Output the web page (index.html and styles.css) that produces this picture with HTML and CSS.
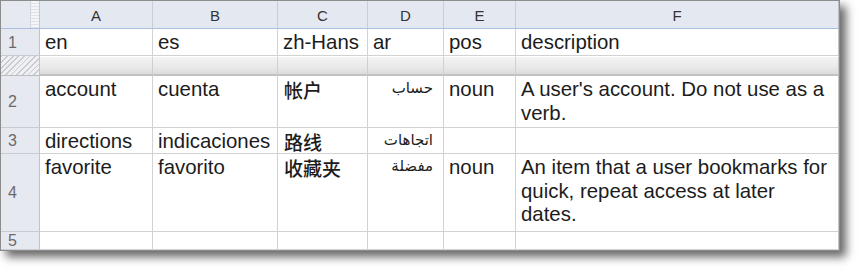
FILE: index.html
```html
<!DOCTYPE html>
<html lang="en">
<head>
<meta charset="utf-8">
<title>Spreadsheet</title>
<link rel="stylesheet" href="styles.css">
</head>
<body>
<div class="sheet">
  <div class="corner"><span class="grip"></span></div>
  <div class="colhdr">A</div>
  <div class="colhdr">B</div>
  <div class="colhdr">C</div>
  <div class="colhdr">D</div>
  <div class="colhdr">E</div>
  <div class="colhdr last">F</div>

  <div class="rowhdr">1</div>
  <div class="cell">en</div>
  <div class="cell">es</div>
  <div class="cell">zh-Hans</div>
  <div class="cell">ar</div>
  <div class="cell">pos</div>
  <div class="cell last">description</div>

  <div class="frozen-hdr"></div>
  <div class="frozen"></div>
  <div class="frozen"></div>
  <div class="frozen"></div>
  <div class="frozen"></div>
  <div class="frozen"></div>
  <div class="frozen last"></div>

  <div class="rowhdr">2</div>
  <div class="cell">account</div>
  <div class="cell">cuenta</div>
  <div class="cell zh" lang="zh-Hans">帐户</div>
  <div class="cell ar" lang="ar" dir="rtl">حساب</div>
  <div class="cell">noun</div>
  <div class="cell last">A user's account. Do not use as a verb.</div>

  <div class="rowhdr">3</div>
  <div class="cell">directions</div>
  <div class="cell">indicaciones</div>
  <div class="cell zh" lang="zh-Hans">路线</div>
  <div class="cell ar" lang="ar" dir="rtl">اتجاهات</div>
  <div class="cell"></div>
  <div class="cell last"></div>

  <div class="rowhdr">4</div>
  <div class="cell">favorite</div>
  <div class="cell">favorito</div>
  <div class="cell zh" lang="zh-Hans">收藏夹</div>
  <div class="cell ar" lang="ar" dir="rtl">مفضلة</div>
  <div class="cell">noun</div>
  <div class="cell last">An item that a user bookmarks for quick, repeat access at later dates.</div>

  <div class="rowhdr partial">5</div>
  <div class="cell"></div>
  <div class="cell"></div>
  <div class="cell"></div>
  <div class="cell"></div>
  <div class="cell"></div>
  <div class="cell last"></div>
</div>
</body>
</html>
```

FILE: styles.css
```css
* { box-sizing: border-box; }

html, body {
  margin: 0;
  padding: 0;
  background: #ffffff;
}

body {
  width: 868px;
  height: 277px;
  overflow: hidden;
  font-family: "Liberation Sans", Arial, sans-serif;
}

.sheet {
  width: 840px;
  height: 251px;
  overflow: hidden;
  border: 1px solid #8c8c8c;
  background: #ffffff;
  box-shadow: 6px 6px 9px rgba(0, 0, 0, 0.6);
  display: grid;
  grid-template-columns: 39px 113px 125px 90px 76px 72px 323px;
  grid-template-rows: 28px 27px 20px 52px 26px 78px 18px;
}

.corner {
  background: #e6e9f0;
  border-right: 1px solid #c3c8d2;
  border-bottom: 1px solid #a9bfe2;
  display: flex;
  justify-content: flex-end;
}

.grip {
  width: 9px;
  height: 100%;
  background: repeating-linear-gradient(180deg, #f4f5f8 0 2px, #dfe2e8 2px 3px);
  border-left: 1px solid #d2d6de;
}

.colhdr {
  background: #e4e8f0;
  border-right: 1px solid #c8cdd6;
  border-bottom: 1px solid #a9bfe2;
  color: #333333;
  font-size: 15px;
  display: flex;
  align-items: center;
  justify-content: center;
  padding-top: 1px;
}

.colhdr.last { border-right: 1px solid #b8bcc4; }

.rowhdr {
  background: #e6e9f0;
  border-right: 1px solid #c0c4cc;
  border-bottom: 1px solid #c8cbd2;
  color: #6a6a6a;
  font-size: 16px;
  display: flex;
  align-items: center;
  padding-left: 7px;
  padding-top: 1px;
}

.rowhdr.partial {
  align-items: flex-end;
  padding-top: 0;
  line-height: 16px;
  padding-bottom: 0;
}

.cell {
  border-right: 1px solid #d2d2d2;
  border-bottom: 1px solid #d2d2d2;
  color: #1c1c1c;
  font-size: 20.4px;
  line-height: 23.6px;
  padding: 2px 5px 0 5px;
  overflow: hidden;
}

.cell.last { border-right: 1px solid #c4c4c4; }

.zh {
  font-family: "Noto Sans CJK SC", sans-serif;
  font-size: 19px;
  font-weight: 500;
  padding-left: 6px;
}

.ar {
  font-family: "DejaVu Sans", sans-serif;
  font-size: 15px;
  line-height: 20px;
  padding: 2px 10px 0 5px;
  text-align: right;
}

.frozen-hdr {
  border-right: 1px solid #c0c4cc;
  border-bottom: 1px solid #bdbdbd;
  background: repeating-linear-gradient(135deg, #c9cbd0 0 1.2px, #eef0f3 1.2px 4px);
}

.frozen {
  border-right: 1px solid #cfcfcf;
  border-bottom: 2px solid #c2c2c2;
  border-top: 1px solid #ffffff;
  background: linear-gradient(180deg, #f3f3f3 0%, #e9e9e9 60%, #dcdcdc 100%);
}

.frozen.last { border-right: 1px solid #c4c4c4; }
```
